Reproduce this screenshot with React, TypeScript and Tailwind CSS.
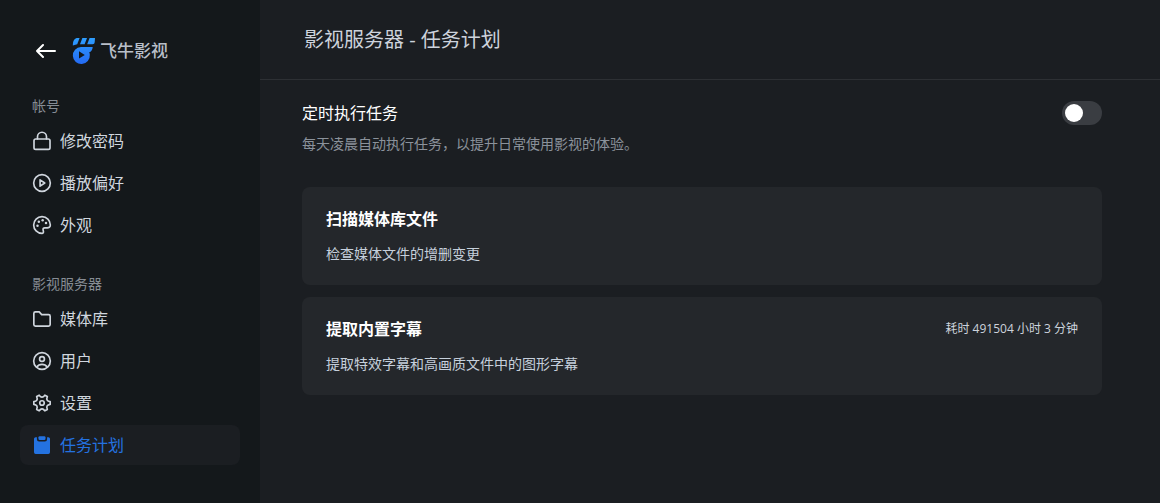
import { useState } from "react";
import type { ReactNode } from "react";

type NavItem = { label: string; icon: ReactNode; active?: boolean };
type NavGroup = { title: string; items: NavItem[] };
type Task = { title: string; desc: string; duration?: string };

function Icon({ children }: { children: ReactNode }) {
  return (
    <svg
      viewBox="0 0 24 24"
      className="size-5 shrink-0"
      fill="none"
      stroke="currentColor"
      strokeWidth="2"
      strokeLinecap="round"
      strokeLinejoin="round"
      aria-hidden="true"
    >
      {children}
    </svg>
  );
}

const NAV_GROUPS: NavGroup[] = [
  {
    title: "帐号",
    items: [
      {
        label: "修改密码",
        icon: (
          <Icon>
            <rect x="2.4" y="9.6" width="19.2" height="12.4" rx="2" />
            <path d="M6.6 9.6V6.9a5.4 5.4 0 0 1 10.8 0v2.7" />
          </Icon>
        ),
      },
      {
        label: "播放偏好",
        icon: (
          <Icon>
            <circle cx="12" cy="12" r="10" />
            <path d="M9.7 8.2v7.6l5.6-3.8z" />
          </Icon>
        ),
      },
      {
        label: "外观",
        icon: (
          <Icon>
            <path d="M12 22a10 10 0 1 1 10-10c0 2.6-1.9 3.5-4 3.4h-2.6c-1.6 0-2.4 1-2.1 2.4l.4 1.8c.3 1.300-.4 2.400-1.700 2.400z" />
            <g fill="currentColor" stroke="none">
              <circle cx="6.6" cy="12.8" r="1.500" />
              <circle cx="8.2" cy="8.2" r="1.500" />
              <circle cx="12.8" cy="6.4" r="1.500" />
              <circle cx="16.8" cy="9.6" r="1.500" />
            </g>
          </Icon>
        ),
      },
    ],
  },
  {
    title: "影视服务器",
    items: [
      {
        label: "媒体库",
        icon: (
          <Icon>
            <path d="M2.2 5.400a1.9 1.9 0 0 1 1.9-1.9h4.600l2.900 3.200h8.300a1.900 1.900 0 0 1 1.900 1.900v10a1.900 1.900 0 0 1-1.900 1.900H4.100a1.900 1.900 0 0 1-1.900-1.900z" />
          </Icon>
        ),
      },
      {
        label: "用户",
        icon: (
          <Icon>
            <circle cx="12" cy="12" r="10" />
            <circle cx="12" cy="9.6" r="2.9" />
            <path d="M5.8 19.200c1.400-2.200 3.600-3.200 6.200-3.200s4.800 1 6.200 3.200" />
          </Icon>
        ),
      },
      {
        label: "设置",
        icon: (
          <Icon>
            <path d="M21.8 13.7Q16.200 14.400 18.400 19.700L15.400 21.400Q12 16.800 8.600 21.400L5.600 19.700Q7.800 14.400 2.200 13.700V10.300Q7.800 9.600 5.600 4.300L8.600 2.600Q12 7.200 15.400 2.600L18.400 4.300Q16.200 9.600 21.800 10.300Z" />
            <circle cx="12" cy="12" r="2.700" />
          </Icon>
        ),
      },
      {
        label: "任务计划",
        active: true,
        icon: (
          <svg viewBox="0 0 24 24" className="size-5 shrink-0" fill="currentColor" aria-hidden="true">
            <path d="M4.4 2.600h1.500v2.600a2.600 2.600 0 0 0 2.600 2.600h7a2.600 2.600 0 0 0 2.600-2.600V2.600h1.500a2 2 0 0 1 2 2v16.200a2 2 0 0 1-2 2H4.400a2 2 0 0 1-2-2V4.600a2 2 0 0 1 2-2z" />
            <rect x="7.800" y="1.400" width="8.400" height="4.600" rx="1.400" />
          </svg>
        ),
      },
    ],
  },
];

const TASKS: Task[] = [
  { title: "扫描媒体库文件", desc: "检查媒体文件的增删变更" },
  { title: "提取内置字幕", desc: "提取特效字幕和高画质文件中的图形字幕", duration: "耗时 491504 小时 3 分钟" },
];

function Logo() {
  return (
    <svg viewBox="0 0 24 28" className="h-7 w-6 shrink-0" aria-hidden="true">
      <defs>
        <linearGradient id="logo-fill" x1="0" y1="0" x2="0" y2="28" gradientUnits="userSpaceOnUse">
          <stop offset="0" stopColor="#2ea0ff" />
          <stop offset="1" stopColor="#2468f2" />
        </linearGradient>
      </defs>
      <g fill="url(#logo-fill)">
        <path d="M5 1h2.600L5.200 7.200 .8 8.600C.8 4.600 2 1.600 5 1z" />
        <path d="M10.400 1h4.600l-2.400 6.200H8z" />
        <path d="M17.600 1h5.400l-.3 4.200a2.100 2.100 0 0 1-2.100 2h-5.400z" />
        <path
          fillRule="evenodd"
          d="M9 10h11.700c-.2 3-1.500 4.800-3.500 5.200.4.800.6 1.600.6 2.500A8.500 8.500 0 1 1 9 10zM7 14.200v7.400l5.800-3.700z"
        />
      </g>
    </svg>
  );
}

function Sidebar() {
  return (
    <aside className="flex w-[260px] shrink-0 flex-col gap-6 bg-[#14181b] px-5 pt-[35px] pb-6">
      <div className="flex h-8 items-center gap-4 pl-4">
        <button type="button" aria-label="返回" className="text-white">
          <svg
            viewBox="0 0 20 20"
            className="size-5"
            fill="none"
            stroke="currentColor"
            strokeWidth="2"
            strokeLinecap="round"
            strokeLinejoin="round"
          >
            <path d="M19 10H1M7 4l-6 6 6 6" />
          </svg>
        </button>
        <div className="flex items-center gap-1">
          <Logo />
          <span className="text-[17px] leading-6 font-medium text-[#b9bfc9]">飞牛影视</span>
        </div>
      </div>

      {NAV_GROUPS.map((group) => (
        <nav key={group.title} aria-label={group.title}>
          <h2 className="pl-3 text-sm leading-[30px] text-[#868c94]">{group.title}</h2>
          <ul className="flex flex-col gap-0.5">
            {group.items.map((item) => (
              <li key={item.label}>
                <a
                  href="#"
                  aria-current={item.active ? "page" : undefined}
                  className={`flex h-10 items-center gap-2 rounded-lg px-3 text-base ${
                    item.active ? "bg-[#1b1e22] text-[#2472e0]" : "text-[#d0d6de] hover:bg-[#1b1e22]"
                  }`}
                >
                  {item.icon}
                  {item.label}
                </a>
              </li>
            ))}
          </ul>
        </nav>
      ))}
    </aside>
  );
}

export default function App() {
  const [enabled, setEnabled] = useState(false);

  return (
    <div className="flex min-h-screen bg-[#1b1e22] font-['Open_Sans','Noto_Sans_CJK_SC',sans-serif]">
      <Sidebar />
      <main className="min-w-0 flex-1">
        <header className="flex h-20 items-center border-b border-[#2d3034] px-11">
          <h1 className="text-xl text-[#cdd3dc]">影视服务器 - 任务计划</h1>
        </header>

        <div className="pt-[21px] pr-4 pb-8">
          <div className="mx-auto flex max-w-[800px] flex-col gap-8">
            <section className="flex items-start justify-between">
              <div className="flex flex-col gap-2">
                <label htmlFor="schedule" className="text-base leading-6 text-white">
                  定时执行任务
                </label>
                <p id="schedule-desc" className="text-sm leading-[22px] text-[#8b929b]">
                  每天凌晨自动执行任务，以提升日常使用影视的体验。
                </p>
              </div>
              <input
                id="schedule"
                type="checkbox"
                role="switch"
                aria-describedby="schedule-desc"
                checked={enabled}
                onChange={(e) => setEnabled(e.target.checked)}
                className="flex h-6 w-10 shrink-0 cursor-pointer appearance-none items-center rounded-full bg-[#3a3d42] px-[3px] before:size-[18px] before:rounded-full before:bg-white checked:justify-end checked:bg-[#2472e0]"
              />
            </section>

            {/* Task cards */}
            <ul className="flex flex-col gap-3">
              {TASKS.map((task) => (
                <li key={task.title} className="flex flex-col gap-3 rounded-lg bg-[#24272b] px-6 py-5">
                  <div className="flex items-center justify-between">
                    <h2 className="text-base leading-6 font-bold text-white">{task.title}</h2>
                    {task.duration && <span className="text-xs text-[#cdd3dc]">{task.duration}</span>}
                  </div>
                  <p className="text-sm leading-[22px] text-[#c6d0dc]">{task.desc}</p>
                </li>
              ))}
            </ul>
          </div>
        </div>
      </main>
    </div>
  );
}
